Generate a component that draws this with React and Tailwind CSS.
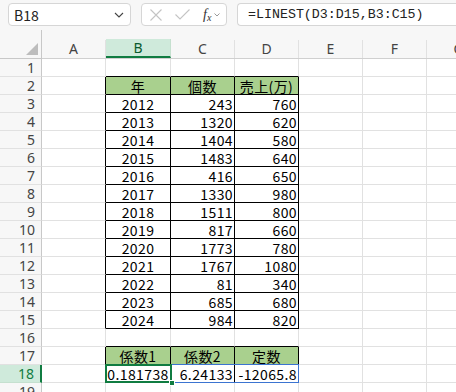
import React from 'react'

const cols = [
  { name: 'A', w: 'w-[64px]' },
  { name: 'B', w: 'w-[65px]' },
  { name: 'C', w: 'w-[64px]' },
  { name: 'D', w: 'w-[64px]' },
  { name: 'E', w: 'w-[64px]' },
  { name: 'F', w: 'w-[64px]' },
  { name: 'G', w: 'w-[64px]' },
]

const data = [
  ['2012', '243', '760'],
  ['2013', '1320', '620'],
  ['2014', '1404', '580'],
  ['2015', '1483', '640'],
  ['2016', '416', '650'],
  ['2017', '1330', '980'],
  ['2018', '1511', '800'],
  ['2019', '817', '660'],
  ['2020', '1773', '780'],
  ['2021', '1767', '1080'],
  ['2022', '81', '340'],
  ['2023', '685', '680'],
  ['2024', '984', '820'],
]

// cell content for row r (1-based), col c (0 = A)
function cellAt(r, c) {
  if (c < 1 || c > 3) return null
  if (r === 2) return { text: ['年', '個数', '売上(万)'][c - 1], head: true }
  if (r >= 3 && r <= 15) return { text: data[r - 3][c - 1], align: c === 1 ? 'center' : 'right' }
  if (r === 17) return { text: ['係数1', '係数2', '定数'][c - 1], head: true }
  if (r === 18) return { text: ['0.181738', '6.24133', '-12065.8'][c - 1], align: c === 1 ? 'center' : 'right' }
  return null
}

const inTable = (r, c) => c >= 1 && c <= 3 && ((r >= 2 && r <= 15) || r === 17 || r === 18)

function Cell({ r, c }) {
  const cell = cellAt(r, c)
  const rightDark = inTable(r, c) || inTable(r, c + 1)
  const bottomDark = inTable(r, c) || inTable(r + 1, c)
  return (
    <div
      className={[
        'h-[18px] shrink-0 box-border border-r border-b flex items-center px-[1px] text-[14px] leading-[16px] tracking-[0.4px] text-black overflow-hidden whitespace-nowrap',
        cols[c].w,
        rightDark ? 'border-r-black' : 'border-r-[#e1e1e1]',
        bottomDark ? 'border-b-black' : 'border-b-[#e1e1e1]',
        cell && cell.head ? 'bg-[#a9d08e] justify-center' : 'bg-white',
        cell && cell.align === 'center' ? 'justify-center' : '',
        cell && cell.align === 'right' ? 'justify-end' : '',
      ].join(' ')}
    >
      {cell ? cell.text : ''}
    </div>
  )
}

function FormulaBar() {
  return (
    <div className="h-[30px] flex items-start pt-[3px] gap-[10px] pl-[8px] bg-[#f7f7f7]">
      <div className="w-[123px] h-[23px] shrink-0 bg-white border border-[#d6d6d6] rounded-[4px] flex items-center justify-between pl-[5px] pr-[6px]">
        <span className="text-[14px] leading-[16px] text-[#222]">B18</span>
        <svg width="10" height="6" viewBox="0 0 10 6" fill="none" stroke="#444" strokeWidth="1.1">
          <path d="M1 1l4 4 4-4" />
        </svg>
      </div>
      <div className="w-[86px] h-[23px] shrink-0 bg-white border border-[#d6d6d6] rounded-[4px] flex items-center pl-[8px] gap-[13px]">
        <svg width="12" height="12" viewBox="0 0 12 12" stroke="#c4c4c4" strokeWidth="1.1">
          <path d="M0.5 0.5l11 11M11.5 0.5l-11 11" />
        </svg>
        <svg width="15" height="11" viewBox="0 0 15 11" fill="none" stroke="#c4c4c4" strokeWidth="1.1">
          <path d="M0.5 5.5l4.5 4.5L14.5 0.5" />
        </svg>
        <div className="flex items-center gap-[3px]">
          <span className="italic text-[14px] text-[#333] font-['Liberation_Serif',serif] leading-none">
            f<sub className="text-[10px]">x</sub>
          </span>
          <svg width="6" height="4" viewBox="0 0 6 4" fill="none" stroke="#999" strokeWidth="1">
            <path d="M0.5 0.5l2.5 2.5 2.5-2.5" />
          </svg>
        </div>
      </div>
      <div className="flex-1 min-w-0 h-[23px] bg-white border border-[#d6d6d6] border-r-0 rounded-l-[4px] flex items-center pl-[10px]">
        <span className="text-[13.3px] leading-[16px] text-[#222] font-['Liberation_Mono',monospace]">=LINEST(D3:D15,B3:C15)</span>
      </div>
    </div>
  )
}

export default function App() {
  const rows = Array.from({ length: 19 }, (_, i) => i + 1)
  return (
    <div className="w-[456px] h-[392px] overflow-hidden bg-white font-['Noto_Sans_CJK_JP','Noto_Sans',sans-serif]">
      <FormulaBar />

      {/* Column headers */}
      <div className="flex h-[29px] bg-[#f7f7f7]">
        <div className="w-[42px] shrink-0 box-border border-r border-[#c8c8c8] border-b relative">
          <div className="absolute right-[3px] bottom-[3px] w-0 h-0 border-l-[12px] border-l-transparent border-b-[12px] border-b-[#bdbdbd]" />
        </div>
        <div className="flex items-end border-b border-[#d0d0d0] overflow-hidden">
          {cols.map((col) => (
            <div
              key={col.name}
              className={[
                'h-[18px] shrink-0 box-border border-r flex items-center justify-center text-[14px] leading-[16px] font-["Noto_Sans",sans-serif]',
                col.w,
                col.name === 'B'
                  ? 'bg-[#cfeadb] border-r-[#c5e0cf] border-b-2 border-b-[#107c41] text-[#0b5a2f] h-[19px]'
                  : 'border-r-[#e1e1e1] text-[#444]',
              ].join(' ')}
            >
              {col.name}
            </div>
          ))}
        </div>
      </div>

      {/* Grid */}
      <div className="relative">
        {rows.map((r) => (
          <div key={r} className="flex">
            <div
              className={[
                'w-[42px] h-[18px] shrink-0 box-border border-b flex items-center justify-end pr-[6px] text-[14px] leading-[16px] font-["Noto_Sans",sans-serif]',
                r === 18
                  ? 'bg-[#cfeadb] border-b-[#c5e0cf] border-r-2 border-r-[#107c41] text-[#107c41]'
                  : 'bg-[#f7f7f7] border-b-[#e1e1e1] border-r border-r-[#c8c8c8] text-[#444]',
              ].join(' ')}
            >
              {r}
            </div>
            {cols.map((col, c) => (
              <Cell key={col.name} r={r} c={c} />
            ))}
          </div>
        ))}

        {/* spill range outline B18:D18 */}
        <div className="absolute left-[105px] top-[305px] w-[194px] h-[19px] border border-[#3b74d1] pointer-events-none" />
        {/* active cell B18 */}
        <div className="absolute left-[105px] top-[305px] w-[67px] h-[19px] border-2 border-[#107c41] pointer-events-none" />
        <div className="absolute left-[169px] top-[321px] w-[6px] h-[6px] bg-[#107c41] border border-white pointer-events-none" />
      </div>
    </div>
  )
}
